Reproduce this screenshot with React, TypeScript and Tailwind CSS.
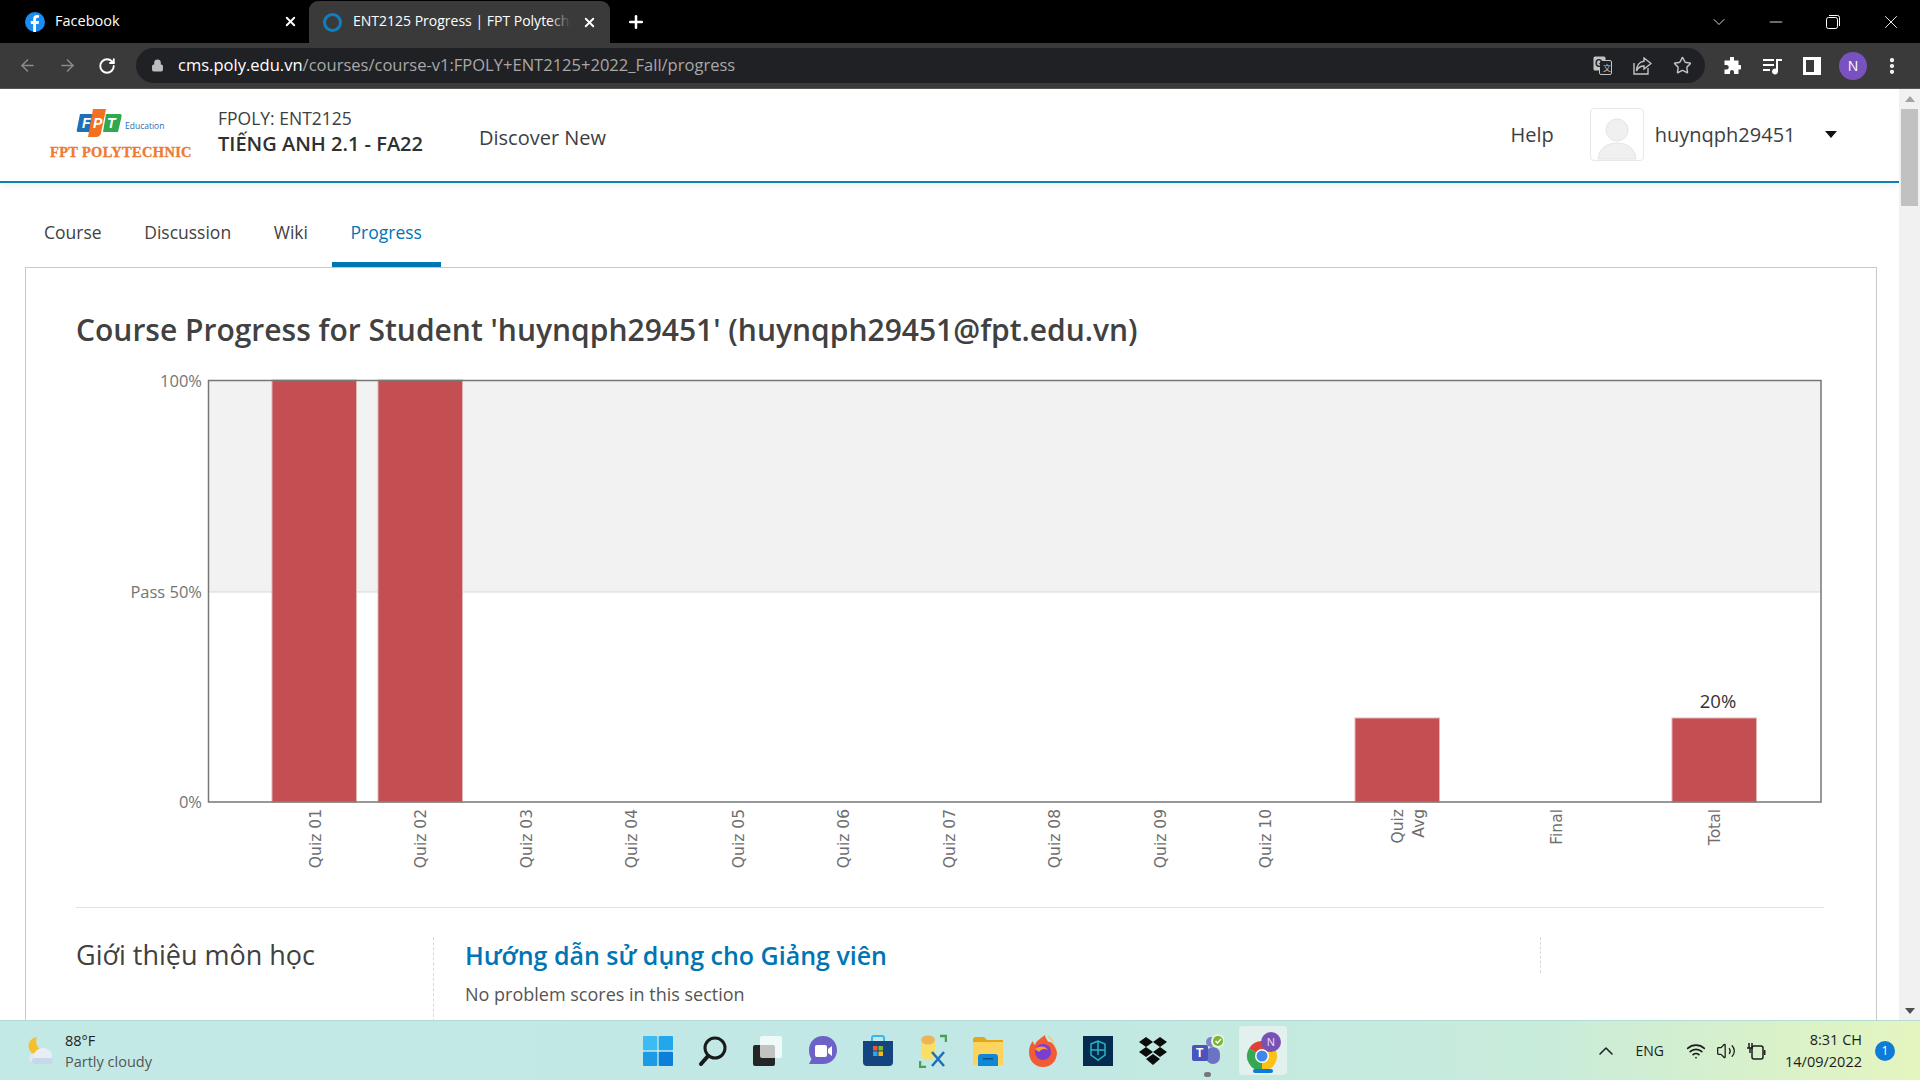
import { ArrowLeft, ArrowRight, ChevronDown, ChevronUp, Lock, Minus, MoreVertical, Plus, RotateCw, Star, Volume2, Wifi, X } from 'lucide-react';

const ox = 76;
const oy = 360;
const quizLabels = [
  { label: 'Quiz 01', x: 316 },
  { label: 'Quiz 02', x: 421 },
  { label: 'Quiz 03', x: 527 },
  { label: 'Quiz 04', x: 632 },
  { label: 'Quiz 05', x: 739 },
  { label: 'Quiz 06', x: 844 },
  { label: 'Quiz 07', x: 950 },
  { label: 'Quiz 08', x: 1055 },
  { label: 'Quiz 09', x: 1161 },
  { label: 'Quiz 10', x: 1266 },
  { label: 'Final', x: 1557 },
  { label: 'Total', x: 1715 },
];
const bars = [
  { x: 272, y: 380 },
  { x: 378, y: 380 },
  { x: 1355, y: 718 },
  { x: 1672, y: 718 },
];

function Chart() {
  return (
    <svg width="1750" height="540" viewBox={`${ox} ${oy} 1750 540`} className="block">
      <rect x="208" y="380" width="1613" height="212" fill="#f2f2f2" />
      <line x1="208" y1="592" x2="1821" y2="592" stroke="#d8d8d8" />
      {bars.map((b) => (
        <rect key={b.x} x={b.x} y={b.y} width="84.5" height={802 - b.y} fill="#c44f52" stroke="#e3b4b5" strokeWidth="1" />
      ))}
      <path d="M208.500 380.500H1821V802H208.500Z" fill="none" stroke="#777" strokeWidth="1.500" />
      <g fontFamily="Open Sans, sans-serif" fontSize="16.500" fill="#757575" textAnchor="end">
        <text x="202" y="387">100%</text>
        <text x="202" y="598">Pass 50%</text>
        <text x="202" y="808">0%</text>
      </g>
      <text x="1718" y="708" fontFamily="Open Sans, sans-serif" fontSize="18.500" fill="#333" textAnchor="middle">20%</text>
      <g fontFamily="DejaVu Sans, sans-serif" fontSize="15.500" fill="#6e6e6e" textAnchor="end">
        {quizLabels.map((q) => (
          <text key={q.label} transform={`translate(${q.x + 5} 809) rotate(-90)`}>{q.label}</text>
        ))}
        <text transform="translate(1403 809) rotate(-90)">Quiz</text>
        <text transform="translate(1424 809) rotate(-90)">Avg</text>
      </g>
    </svg>
  );
}

function Logo() {
  return (
    <svg width="150" height="60" viewBox="0 0 150 60" className="block">
      <path d="M35 9H50L46 27H33Q31 27 32 24Z" fill="#1f6fb5" />
      <path d="M48 4H61L56 28Q55 32 51 32H43Z" fill="#f37021" />
      <path d="M61 9H75Q77 9 76.500 12L73 27H58Z" fill="#2fa84f" />
      <g fontFamily="Liberation Sans, sans-serif" fontStyle="italic" fontWeight="700" fontSize="14" fill="#fff">
        <text x="37" y="23">F</text>
        <text x="48" y="23">P</text>
        <text x="62" y="23">T</text>
      </g>
      <text x="80" y="24" fontFamily="Open Sans, sans-serif" fontSize="8.500" fill="#2a6db0">Education</text>
      <text x="5" y="52" fontFamily="Liberation Serif, serif" fontWeight="700" fontSize="14.500" letterSpacing="0.300" stroke="#ee7a33" strokeWidth="0.350" fill="#ee7a33">FPT POLYTECHNIC</text>
    </svg>
  );
}

function TabStrip() {
  return (
    <div className="h-[43px] bg-black flex text-white shrink-0 text-[14.5px] leading-[20px]">
      <div className="w-[309px] flex items-center pl-[25px] pr-[11px]">
        <svg width="20" height="20" viewBox="0 0 20 20">
          <circle cx="10" cy="10" r="10" fill="#1b8cf2" />
          <path d="M11 20V12H13.600L14 9H11V7.300C11 6.400 11.400 5.800 12.600 5.800H14V3.200C13.400 3.100 12.700 3 12 3C9.700 3 8.200 4.400 8.200 6.900V9H5.800V12H8.200V20Z" fill="#fff" />
        </svg>
        <span className="ml-[10px] mt-[-1px]">Facebook</span>
        <X size={15} strokeWidth={3} className="ml-auto" />
      </div>
      <div className="w-[301px] mt-[1px] flex items-center pl-[14px] pr-[13px] bg-[#3a3a3a] rounded-t-[9px]">
        <div className="w-[19px] h-[19px] rounded-full border-[3px] border-[#0f7fc0] shrink-0" />
        <div className="relative ml-[11px] mt-[-2px] w-[218px] overflow-hidden whitespace-nowrap text-[14px]">
          ENT2125 Progress | FPT Polytechnic
          <span className="absolute right-0 top-0 h-full w-[22px] bg-[linear-gradient(90deg,transparent,#3a3a3a)]" />
        </div>
        <X size={15} strokeWidth={3} className="ml-auto" />
      </div>
      <div className="w-[43px] ml-[4px] flex items-center justify-center">
        <Plus size={20} strokeWidth={3} />
      </div>
      <div className="ml-auto flex items-center h-full">
        <ChevronDown size={20} strokeWidth={1} className="mr-[37px]" />
        <Minus size={20} strokeWidth={1} className="mr-[40px]" />
        <svg width="14" height="14" viewBox="0 0 14 14" fill="none" stroke="#fff" className="mr-[40px]">
          <rect x="0.500" y="2.500" width="11" height="11" rx="2" />
          <path d="M3 .5H11.500A2 2 0 0 1 13.500 2.500V11" />
        </svg>
        <X size={22} strokeWidth={1} className="mr-[18px]" />
      </div>
    </div>
  );
}

function Toolbar() {
  return (
    <div className="h-[46px] bg-[#3a3a3a] border-b border-[#555] flex items-center shrink-0">
      <div className="w-[137px] flex items-center pl-[18px] gap-[21px] shrink-0">
        <ArrowLeft size={19} className="text-[#8a8a8a]" />
        <ArrowRight size={19} className="text-[#8a8a8a]" />
        <RotateCw size={18} strokeWidth={2.5} className="text-white" />
      </div>
      <div className="ml-[-1px] w-[1569px] h-[35px] bg-[#202124] rounded-full flex items-center pl-[15px] text-[16.55px] shrink-0">
        <Lock size={13} fill="#bdbdbd" className="text-[#bdbdbd]" />
        <span className="ml-[14px] text-white">cms.poly.edu.vn</span>
        <span className="text-[#a8a8a8]">/courses/course-v1:FPOLY+ENT2125+2022_Fall/progress</span>
        <div className="ml-auto flex items-center pr-[13px] gap-[21px] text-[#c4c4c4]">
          <svg width="19" height="19" viewBox="0 0 19 19">
            <rect x="0.500" y="0.500" width="12" height="14" rx="1.500" fill="#c4c4c4" />
            <rect x="6.500" y="4.500" width="12" height="14" rx="1.500" fill="#202124" stroke="#c4c4c4" />
            <text x="2" y="11" fontFamily="Liberation Sans, sans-serif" fontWeight="700" fontSize="10" fill="#202124">G</text>
            <text x="10" y="15" fontFamily="Noto Sans CJK SC, sans-serif" fontSize="8" fill="#c4c4c4">文</text>
          </svg>
          <svg width="19" height="18" viewBox="0 0 19 18" fill="none" stroke="currentColor" strokeWidth="1.400">
            <path d="M1 6V17H15V11" />
            <path d="M11 1L18 6.500L11 12V9C7 9 5 10.500 3.500 14C3.500 8.500 6.500 4.700 11 4.200Z" />
          </svg>
          <Star size={19} strokeWidth={1.8} />
        </div>
      </div>
      <div className="flex-1 flex items-center pl-[18px] text-white">
        <svg width="18" height="18" viewBox="0 0 18 18" fill="#fff">
          <path d="M7 1a2 2 0 0 1 4 0V3.500H15.500V8H17a2.200 2.200 0 0 1 0 4.500H15.500V17H11V15a2 2 0 0 0-4 0V17H1.500V12.500H3.500a2.200 2.200 0 0 0 0-4.500H1.500V3.500H7Z" />
        </svg>
        <svg width="19" height="18" viewBox="0 0 19 18" fill="#fff" className="ml-[22px]">
          <rect x="0" y="2" width="11" height="2" />
          <rect x="0" y="7" width="11" height="2" />
          <rect x="0" y="12" width="7" height="2" />
          <path d="M13 2H19V4H15V14.500A3 3 0 1 1 13 11.700Z" />
        </svg>
        <svg width="18" height="18" viewBox="0 0 18 18" className="ml-[21px]">
          <path d="M0 0H18V18H0Z" fill="#fff" />
          <rect x="3" y="3" width="8" height="12" fill="#3a3a3a" />
        </svg>
        <div className="ml-[18px] w-[28px] h-[28px] rounded-full bg-[#7952c0] text-white text-[14px] flex items-center justify-center">N</div>
        <MoreVertical size={20} strokeWidth={3} className="ml-[15px]" />
      </div>
    </div>
  );
}

function SiteHeader() {
  return (
    <header className="h-[94px] border-b-2 border-[#0f7fb8] flex items-center shadow-[0_4px_8px_rgba(0,0,0,0.05)] shrink-0 text-[#3d3e3f]">
      <div className="ml-[45px] w-[173px]"><Logo /></div>
      <div className="flex flex-col mt-[-2px]">
        <span className="text-[17.5px] leading-[24px] mt-[-4px]">FPOLY: ENT2125</span>
        <span className="text-[20px] leading-[28px] font-semibold text-[#2f3030]">TIẾNG ANH 2.1 - FA22</span>
      </div>
      <span className="ml-[56px] text-[20px] mt-[6px]">Discover New</span>
      <div className="ml-auto flex items-center mt-[-1px]">
        <span className="text-[20px] mr-[36px]">Help</span>
        <div className="w-[54px] h-[53px] border border-[#e8e8e8] rounded-[4px] flex items-end justify-center overflow-hidden mr-[11px]">
          <svg width="40" height="42" viewBox="0 0 40 42" fill="#f0f0f0" stroke="#e4e4e4">
            <circle cx="20" cy="12" r="11" />
            <path d="M1 41C2 30 10 25 20 25S38 30 39 41Z" />
          </svg>
        </div>
        <span className="text-[20px]">huynqph29451</span>
        <span className="ml-[29.500px] mr-[62px] w-0 h-0 border-x-[6px] border-x-transparent border-t-[7px] border-t-[#111]" />
      </div>
    </header>
  );
}

function CourseTabs() {
  const tabs = ['Course', 'Discussion', 'Wiki', 'Progress'];
  return (
    <nav className="flex gap-[4.6px] pl-[25px] mt-[1px] h-[83px] items-end text-[17.5px] text-[#414141] shrink-0">
      {tabs.map((tab) => (
        <a
          key={tab}
          className={tab === 'Progress'
            ? 'h-[56px] px-[19px] flex items-center border-b-[5px] border-[#0075b4] text-[#0075b4] pb-[8px]'
            : 'h-[56px] px-[19px] flex items-center pb-[8px] border-b-[5px] border-transparent'}
        >
          {tab}
        </a>
      ))}
    </nav>
  );
}

function TaskIcon({ children, mark }: { children: React.ReactNode; mark?: 'dot' | 'bar' }) {
  return (
    <div className={mark === 'bar'
      ? 'relative w-[48px] mx-[3.5px] h-[49px] rounded-[4px] bg-[#e2f1ee] flex items-center justify-center'
      : 'relative w-[55px] h-[49px] flex items-center justify-center'}>
      {children}
      {mark === 'dot' && <span className="absolute bottom-[-2px] left-[24px] w-[7px] h-[5px] rounded-full bg-[#777]" />}
      {mark === 'bar' && <span className="absolute bottom-[2px] left-[14px] w-[20px] h-[4px] rounded-full bg-[#0f7bd9]" />}
    </div>
  );
}

function Taskbar() {
  return (
    <div className="h-[60px] shrink-0 border-t border-[#b4dcd6] grid grid-cols-[1fr_auto_1fr] items-center bg-[linear-gradient(90deg,#c3e9e5_0%,#c1e8e4_55%,#c8ebdb_80%,#e4f5bf_100%)]">
      <div className="flex items-center pl-[26px]">
        <svg width="28" height="30" viewBox="0 0 28 30">
          <path d="M11 1A9 9 0 1 0 19 15A10 10 0 0 1 11 1Z" fill="#f6c02d" />
          <ellipse cx="9" cy="22" rx="6" ry="5" fill="#dfe9f4" />
          <ellipse cx="17" cy="20" rx="9" ry="8" fill="#e7eef7" />
          <rect x="6" y="22" width="21" height="6" rx="3" fill="#c9d8e8" />
        </svg>
        <div className="ml-[11px] text-[14.5px] leading-[21px]">
          <div className="text-[#222]">88°F</div>
          <div className="text-[#555]">Partly cloudy</div>
        </div>
      </div>
      <div className="flex h-full items-center">
        <TaskIcon>
          <svg width="30" height="30" viewBox="0 0 30 30">
            <rect width="14.300" height="14.300" fill="#3dbcf4" rx="1" />
            <rect x="15.700" width="14.300" height="14.300" fill="#22a7ec" rx="1" />
            <rect y="15.700" width="14.300" height="14.300" fill="#1c9ae6" rx="1" />
            <rect x="15.700" y="15.700" width="14.300" height="14.300" fill="#0a80d8" rx="1" />
          </svg>
        </TaskIcon>
        <TaskIcon>
          <svg width="28" height="30" viewBox="0 0 28 30" fill="none" stroke="#1a1a1a">
            <circle cx="16" cy="12" r="10" strokeWidth="3" />
            <path d="M9 20L2 28" strokeWidth="4" strokeLinecap="round" />
          </svg>
        </TaskIcon>
        <TaskIcon>
          <svg width="30" height="30" viewBox="0 0 30 30">
            <rect x="0" y="9" width="22" height="21" rx="2" fill="#252525" />
            <rect x="7" y="0" width="22" height="22" rx="2" fill="#fff" fillOpacity="0.72" />
          </svg>
        </TaskIcon>
        <TaskIcon>
          <svg width="30" height="32" viewBox="0 0 30 32">
            <path d="M15 1C23 1 29 7 29 15S23 29 15 29H1L3.500 24C1.800 21.500 1 18.500 1 15C1 7 7 1 15 1Z" fill="#6d62c7" />
            <rect x="7" y="10" width="12" height="12" rx="2" fill="#fff" />
            <path d="M20 14L24 11V21L20 18Z" fill="#fff" />
          </svg>
        </TaskIcon>
        <TaskIcon>
          <svg width="30" height="32" viewBox="0 0 30 32">
            <path d="M9 6V3Q9 1 11 1H19Q21 1 21 3V6" fill="none" stroke="#39b5f0" strokeWidth="2" />
            <path d="M0 6H30V27Q30 31 26 31H4Q0 31 0 27Z" fill="#14457e" />
            <rect x="10" y="11" width="4.500" height="4.500" fill="#ef5a2b" />
            <rect x="15.500" y="11" width="4.500" height="4.500" fill="#7fba2c" />
            <rect x="10" y="16.500" width="4.500" height="4.500" fill="#2aa5ee" />
            <rect x="15.500" y="16.500" width="4.500" height="4.500" fill="#fcb813" />
          </svg>
        </TaskIcon>
        <TaskIcon>
          <svg width="28" height="34" viewBox="0 0 28 34" fill="none">
            <rect x="2" y="2" width="14" height="24" rx="6" fill="#f7df68" />
            <ellipse cx="9" cy="6" rx="7" ry="4.500" fill="#eeb558" />
            <path d="M21 2H27V8M1 27V33H7" stroke="#4b9e52" strokeWidth="2.500" />
            <path d="M13 18L25 32M25 18L13 32" stroke="#1e6fb3" strokeWidth="2.500" />
          </svg>
        </TaskIcon>
        <TaskIcon>
          <svg width="30" height="30" viewBox="0 0 30 30">
            <path d="M0 4Q0 1 3 1H11L14 4H30V8H0Z" fill="#e3a51a" />
            <path d="M0 6H30V29H0Z" fill="#fcd35c" />
            <path d="M5 21Q5 18 8 18H22Q25 18 25 21V30H5Z" fill="#0f87d6" />
            <rect x="10" y="22" width="10" height="1.500" fill="#0b4d8c" />
          </svg>
        </TaskIcon>
        <TaskIcon>
          <svg width="30" height="34" viewBox="0 0 30 34">
            <path d="M15 33C6 33 1 26 1 18C1 13 3 9 5 7C5 9 6 10 7 11C8 7 13 4 17 1C17 4 19 5 20 8C23 7 27 11 29 18C29 27 23 33 15 33Z" fill="#f25b33" />
            <path d="M20 1C21 5 26 7 28 14C28 16 28 17 29 18C28 10 24 5 20 1Z" fill="#ffb728" />
            <circle cx="15" cy="18" r="8" fill="#7a3fd0" />
            <path d="M7 15C10 12 17 11 20 16C17 14 13 15 11 18Z" fill="#ff9a33" />
          </svg>
        </TaskIcon>
        <TaskIcon>
          <svg width="30" height="30" viewBox="0 0 30 30" fill="none">
            <rect width="30" height="30" fill="#052b4e" />
            <path d="M8 8L15 5L22 8V19L15 24L8 19ZM15 5V19M8 14H22" stroke="#26b5c9" strokeWidth="1.500" />
          </svg>
        </TaskIcon>
        <TaskIcon>
          <svg width="30" height="30" viewBox="0 0 30 30" fill="#0c0c0c">
            <path d="M8 1L15 6L8 11L1 6Z" />
            <path d="M22 1L29 6L22 11L15 6Z" />
            <path d="M8 11L15 16L8 21L1 16Z" />
            <path d="M22 11L29 16L22 21L15 16Z" />
            <path d="M15 18L22 23L15 29L8 23Z" />
          </svg>
        </TaskIcon>
        <TaskIcon mark="dot">
          <svg width="32" height="34" viewBox="0 0 32 34">
            <circle cx="19" cy="8" r="5" fill="#7b83c9" />
            <rect x="14" y="13" width="14" height="17" rx="7" fill="#6b73c4" />
            <rect x="0" y="11" width="16" height="16" rx="2" fill="#4b53bc" />
            <text x="4" y="23" fontFamily="Liberation Sans, sans-serif" fontWeight="700" fontSize="12" fill="#fff">T</text>
            <circle cx="26" cy="7" r="7" fill="#e8f0e0" />
            <circle cx="26" cy="7" r="5" fill="#78b72e" />
            <path d="M23.500 7L25.500 9L29 5" stroke="#fff" strokeWidth="1.500" fill="none" />
          </svg>
        </TaskIcon>
        <TaskIcon mark="bar">
          <svg width="38" height="40" viewBox="0 0 38 40">
            <path d="M18 25L5 17.500A15 15 0 0 1 31 17.500Z" fill="#dc4438" />
            <path d="M18 25L31 17.500A15 15 0 0 1 18 40Z" fill="#fbc116" />
            <path d="M18 25L18 40A15 15 0 0 1 5 17.500Z" fill="#36a853" />
            <circle cx="18" cy="25" r="7" fill="#fff" />
            <circle cx="18" cy="25" r="5.500" fill="#3f86f0" />
            <circle cx="27" cy="11" r="10" fill="#7a52b5" />
            <text x="27" y="15" textAnchor="middle" fontFamily="Open Sans, sans-serif" fontSize="11" fill="#e8e0f5">N</text>
          </svg>
        </TaskIcon>
      </div>
      <div className="flex items-center justify-end text-[#1c1c1c]">
        <ChevronUp size={24} strokeWidth={1.5} className="mr-[18px]" />
        <span className="text-[14px] mr-[22px]">ENG</span>
        <Wifi size={20} className="mr-[10px]" />
        <Volume2 size={20} strokeWidth={1.5} className="mr-[10px]" />
        <svg width="20" height="20" viewBox="0 0 20 20" fill="none" stroke="#1c1c1c" strokeWidth="1.500" className="mr-[19px]">
          <rect x="6" y="5" width="11" height="13" rx="2" />
          <path d="M1 7H7M3 2V7M6 2V7M4 7V12" />
          <path d="M18.700 9V14" />
        </svg>
        <div className="flex flex-col items-end text-[14.5px] leading-[22px]">
          <span>8:31 CH</span>
          <span>14/09/2022</span>
        </div>
        <div className="ml-[13px] mr-[25px] w-[20px] h-[20px] rounded-full bg-[#0f7bd9] text-white text-[12px] flex items-center justify-center">1</div>
      </div>
    </div>
  );
}

export default function App() {
  return (
    <div className="w-[1920px] h-[1080px] flex flex-col overflow-hidden bg-white font-['Open_Sans',sans-serif]">
      <TabStrip />
      <Toolbar />
      <div className="flex-1 min-h-0 flex">
        <main className="w-[1899px] shrink-0 flex flex-col overflow-hidden">
          <SiteHeader />
          <CourseTabs />
          <section className="ml-[25px] w-[1852px] border border-[#c8c8c8] pl-[50px] flex-1">
            <h1 className="text-[30px] leading-[40px] font-semibold text-[#414141] mt-[42px] mb-[10px] whitespace-nowrap">
              Course Progress for Student 'huynqph29451' (huynqph29451@fpt.edu.vn)
            </h1>
            <Chart />
            <div className="w-[1748px] border-t border-[#e2e2e2] mt-[7px] flex pt-[29px]">
              <h2 className="w-[358px] shrink-0 text-[27px] leading-[36px] font-normal text-[#414141] border-r border-dashed border-[#d8d8d8] h-[90px] whitespace-nowrap">
                Giới thiệu môn học
              </h2>
              <div className="w-[1107px] pl-[31px] border-r border-dashed border-[#d8d8d8] h-[36px]">
                <h3 className="text-[25px] leading-[36px] font-semibold text-[#0075b4] whitespace-nowrap">Hướng dẫn sử dụng cho Giảng viên</h3>
                <p className="text-[18px] leading-[24px] text-[#555] mt-[9px] whitespace-nowrap">No problem scores in this section</p>
              </div>
            </div>
          </section>
        </main>
        <div className="flex-1 bg-[#f1f1f1] flex flex-col items-center pt-[7px] pb-[6px]">
          <span className="w-0 h-0 border-x-[5px] border-x-transparent border-b-[6px] border-b-[#a3a3a3]" />
          <div className="w-[17px] h-[97px] bg-[#c1c1c1] mt-[7px]" />
          <span className="mt-auto w-0 h-0 border-x-[5px] border-x-transparent border-t-[6px] border-t-[#505050]" />
        </div>
      </div>
      <Taskbar />
    </div>
  );
}
